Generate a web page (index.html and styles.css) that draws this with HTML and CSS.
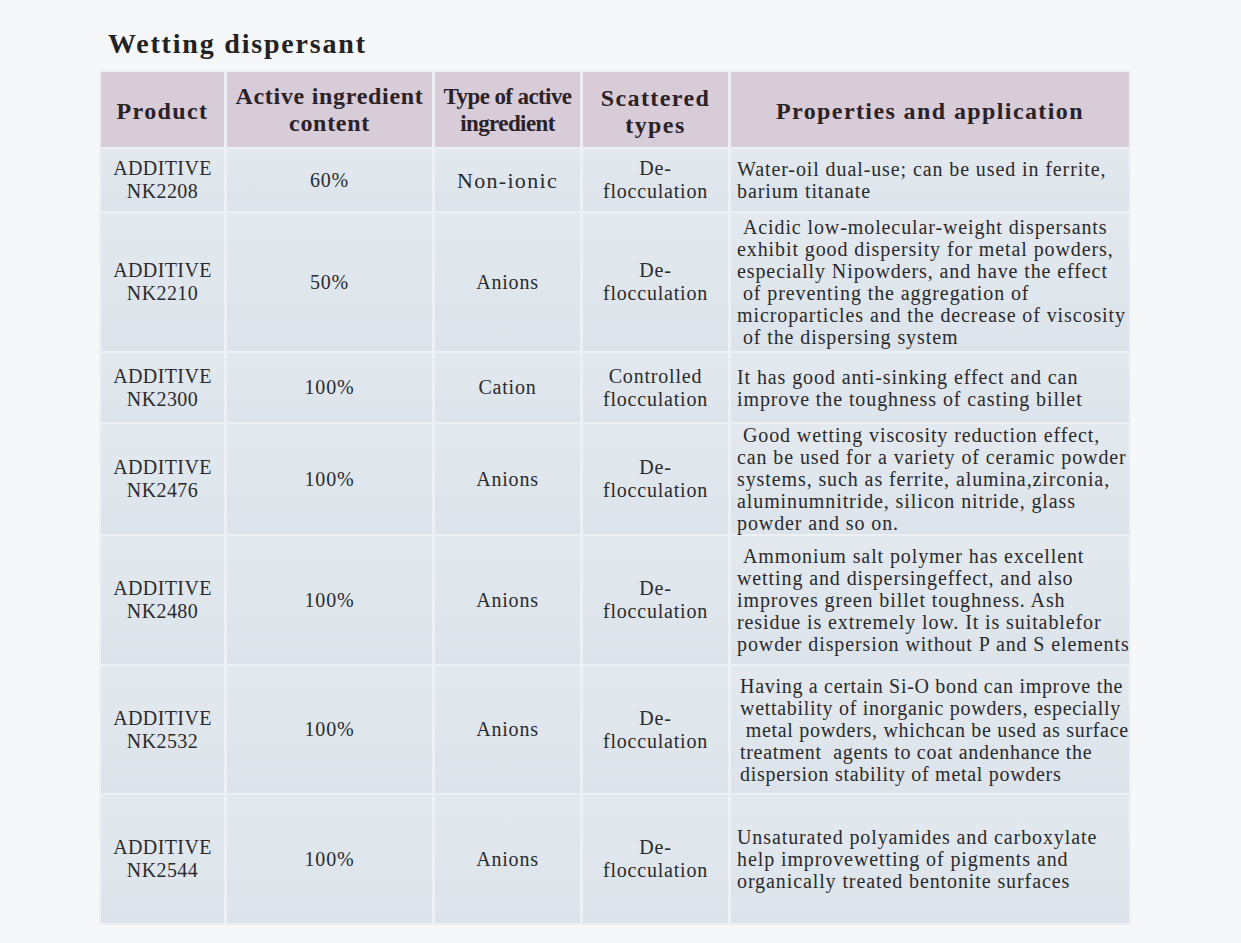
FILE: index.html
```html
<!DOCTYPE html>
<html lang="en">
<head>
<meta charset="utf-8">
<title>Wetting dispersant</title>
<link rel="stylesheet" href="styles.css">
</head>
<body>
<main class="page">
  <h1 class="title">Wetting dispersant</h1>
  <div class="sheet" role="table">
    <div class="th" role="columnheader">Product</div>
    <div class="th th-tight" role="columnheader">Active ingredient<br>content</div>
    <div class="th th-narrow" role="columnheader">Type of active<br>ingredient</div>
    <div class="th" role="columnheader">Scattered<br>types</div>
    <div class="th" role="columnheader">Properties and application</div>

    <div class="td td-product">ADDITIVE<br>NK2208</div>
    <div class="td">60%</div>
    <div class="td td-big">Non-ionic</div>
    <div class="td">De-<br>flocculation</div>
    <div class="td td-desc">Water-oil dual-use; can be used in ferrite,<br>barium titanate</div>

    <div class="td td-product">ADDITIVE<br>NK2210</div>
    <div class="td">50%</div>
    <div class="td">Anions</div>
    <div class="td">De-<br>flocculation</div>
    <div class="td td-desc">&nbsp;Acidic low-molecular-weight dispersants<br>exhibit good dispersity for metal powders,<br>especially Nipowders, and have the effect<br>&nbsp;of preventing the aggregation of<br>microparticles and the decrease of viscosity<br>&nbsp;of the dispersing system</div>

    <div class="td td-product">ADDITIVE<br>NK2300</div>
    <div class="td">100%</div>
    <div class="td">Cation</div>
    <div class="td">Controlled<br>flocculation</div>
    <div class="td td-desc">It has good anti-sinking effect and can<br>improve the toughness of casting billet</div>

    <div class="td td-product">ADDITIVE<br>NK2476</div>
    <div class="td">100%</div>
    <div class="td">Anions</div>
    <div class="td">De-<br>flocculation</div>
    <div class="td td-desc">&nbsp;Good wetting viscosity reduction effect,<br>can be used for a variety of ceramic powder<br>systems, such as ferrite, alumina,zirconia,<br>aluminumnitride, silicon nitride, glass<br>powder and so on.</div>

    <div class="td td-product">ADDITIVE<br>NK2480</div>
    <div class="td">100%</div>
    <div class="td">Anions</div>
    <div class="td">De-<br>flocculation</div>
    <div class="td td-desc">&nbsp;Ammonium salt polymer has excellent<br>wetting and dispersingeffect, and also<br>improves green billet toughness. Ash<br>residue is extremely low. It is suitablefor<br>powder dispersion without P and S elements</div>

    <div class="td td-product">ADDITIVE<br>NK2532</div>
    <div class="td">100%</div>
    <div class="td">Anions</div>
    <div class="td">De-<br>flocculation</div>
    <div class="td td-desc td-desc-in">Having a certain Si-O bond can improve the<br>wettability of inorganic powders, especially<br>&nbsp;metal powders, whichcan be used as surface<br>treatment&nbsp; agents to coat andenhance the<br>dispersion stability of metal powders</div>

    <div class="td td-product">ADDITIVE<br>NK2544</div>
    <div class="td">100%</div>
    <div class="td">Anions</div>
    <div class="td">De-<br>flocculation</div>
    <div class="td td-desc">Unsaturated polyamides and carboxylate<br>help improvewetting of pigments and<br>organically treated bentonite surfaces</div>
  </div>
</main>
</body>
</html>
```

FILE: styles.css
```css
html, body {
  margin: 0;
  padding: 0;
  background: #f6f7f8;
}

.page {
  padding: 27px 0 0 99px;
  font-family: "Liberation Serif", "Times New Roman", serif;
  color: #2a2a2c;
}

.title {
  margin: 0 0 9px 9px;
  font-size: 28px;
  line-height: 34px;
  font-weight: bold;
  letter-spacing: 1.8px;
  color: #222124;
}

.sheet {
  display: grid;
  grid-template-columns: 123px 205px 145px 145px 398px;
  grid-template-rows: 75px 62px 138px 69px 110px 128px 127px 128px;
  column-gap: 3px;
  row-gap: 2px;
  padding: 2px;
  width: max-content;
  background: #edf1f5;
}

.th {
  display: flex;
  align-items: center;
  justify-content: center;
  text-align: center;
  padding-top: 4px;
  box-sizing: border-box;
  background: #d8ccd9;
  font-weight: bold;
  font-size: 24px;
  line-height: 27px;
  letter-spacing: 1.4px;
  color: #2a2226;
  white-space: nowrap;
}

.th-tight {
  letter-spacing: 0.7px;
  padding-top: 0;
}

.th-narrow {
  letter-spacing: -0.6px;
  font-size: 23px;
  padding-top: 0;
}

.td {
  display: flex;
  align-items: center;
  justify-content: center;
  text-align: center;
  background: linear-gradient(#e3e9ef, #dce3ea);
  font-size: 20px;
  line-height: 23px;
  letter-spacing: 0.8px;
  white-space: nowrap;
}

.td-product {
  letter-spacing: 0.4px;
}

.td-big {
  font-size: 22px;
  letter-spacing: 1.3px;
}

.td-desc {
  justify-content: flex-start;
  text-align: left;
  padding-left: 6px;
  line-height: 22px;
  letter-spacing: 0.9px;
}

.td-desc-in {
  padding-left: 9px;
  letter-spacing: 0.7px;
}
```
